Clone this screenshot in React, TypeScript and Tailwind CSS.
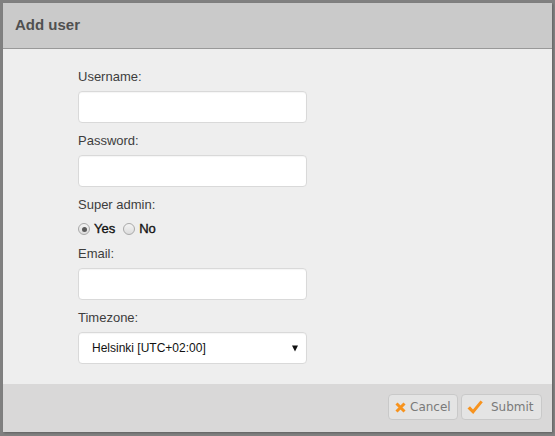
import React from 'react';

const labelCls = 'block h-[20px] leading-[20px] mb-[4px] text-[13px] text-[#3d3d3d]';
const inputCls =
  'block w-[229px] h-[32px] rounded-[4px] border border-[#d9d9d9] bg-white shadow-[inset_0_1px_1px_rgba(0,0,0,0.04)]';

const Radio: React.FC<{ checked?: boolean; label: string }> = ({ checked, label }) => (
  <label className="flex items-center gap-[4px]">
    <span className="flex h-[12px] w-[12px] items-center justify-center rounded-full border border-[#a9a9a9] bg-gradient-to-b from-[#f4f4f4] to-[#dcdcdc]">
      {checked && <span className="h-[5px] w-[5px] rounded-full bg-[#5a5a5a]" />}
    </span>
    <span className="text-[13px] text-[#111] [-webkit-text-stroke:0.35px_#111]">{label}</span>
  </label>
);

const App: React.FC = () => {
  return (
    <div
      className="w-[555px] h-[436px] bg-[#808080] pt-[3px] pl-[3px]"
      style={{ fontFamily: '"Liberation Sans", Arial, sans-serif' }}
    >
      <div className="flex h-[429px] w-[549px] flex-col bg-[#eeeeee] shadow-[1px_1px_2px_rgba(0,0,0,0.25)]">
        {/* header */}
        <div className="flex h-[46px] items-center border-b border-[#999] bg-[#cacaca] pl-[12px]">
          <h2 className="text-[15px] font-bold text-[#505050]">Add user</h2>
        </div>

        {/* form */}
        <div className="flex-1 pl-[75px] pt-[18px]">
          <label className={labelCls}>Username:</label>
          <input className={`${inputCls} mb-[8px]`} type="text" />

          <label className={labelCls}>Password:</label>
          <input className={`${inputCls} mb-[8px]`} type="password" />

          <label className={labelCls}>Super admin:</label>
          <div className="mb-[5px] flex h-[20px] items-center gap-[8px]">
            <Radio checked label="Yes" />
            <Radio label="No" />
          </div>

          <label className={labelCls}>Email:</label>
          <input className={`${inputCls} mb-[8px]`} type="text" />

          <label className={labelCls}>Timezone:</label>
          <div className={`${inputCls} flex items-center justify-between pl-[13px] pr-[8px] shadow-[0_1px_2px_rgba(0,0,0,0.12)]`}>
            <span className="text-[12px] text-[#111]">Helsinki [UTC+02:00]</span>
            <svg width="6" height="7" viewBox="0 0 6 7">
              <path d="M0 0.5 L6 0.5 L3 6.5 Z" fill="#111" />
            </svg>
          </div>
        </div>

        {/* footer */}
        <div
          className="flex h-[48px] items-start justify-end gap-[3px] bg-[#d9d8d8] pr-[10px] pt-[10px]"
          style={{ fontFamily: '"DejaVu Sans", Verdana, sans-serif' }}
        >
          <button className="flex h-[26px] w-[70px] items-center gap-[4px] rounded-[4px] border border-[#c9c9c9] bg-[#e4e4e4] pl-[6px] text-[12px] text-[#7a7a7a]">
            <svg width="11" height="11" viewBox="0 0 11 11">
              <path d="M1.5 1.5 L9.5 9.5 M9.5 1.5 L1.5 9.5" stroke="#f7931e" strokeWidth="3" strokeLinecap="butt" />
            </svg>
            Cancel
          </button>
          <button className="flex h-[26px] w-[81px] items-center gap-[8px] rounded-[4px] border border-[#c9c9c9] bg-[#e4e4e4] pl-[5px] text-[12px] text-[#7a7a7a]">
            <svg width="16" height="15" viewBox="0 0 16 15">
              <path d="M0.5 8.5 L3 6.3 L6 9.4 L13.5 0.5 L15.8 2.2 L6.2 14 Z" fill="#f7931e" />
            </svg>
            Submit
          </button>
        </div>
      </div>
    </div>
  );
};

export default App;
